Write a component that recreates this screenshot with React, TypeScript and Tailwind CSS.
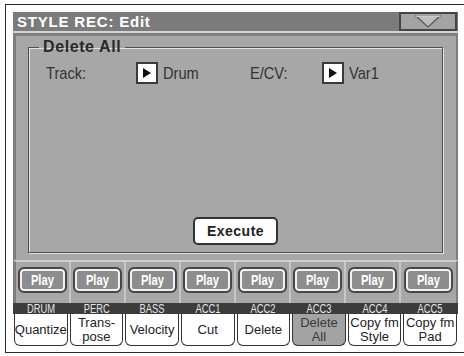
import React from 'react'

const tracks = ['DRUM', 'PERC', 'BASS', 'ACC1', 'ACC2', 'ACC3', 'ACC4', 'ACC5']

const tabs: { lines: string[]; active?: boolean }[] = [
  { lines: ['Quantize'] },
  { lines: ['Trans-', 'pose'] },
  { lines: ['Velocity'] },
  { lines: ['Cut'] },
  { lines: ['Delete'] },
  { lines: ['Delete', 'All'], active: true },
  { lines: ['Copy fm', 'Style'] },
  { lines: ['Copy fm', 'Pad'] },
]

function ArrowBox() {
  return (
    <div className="w-[22px] h-[22px] border-2 border-[#3a3a3a] bg-white flex items-center justify-center shrink-0">
      <svg width="8" height="10" viewBox="0 0 8 10">
        <polygon points="0,0 8,5 0,10" fill="#111" />
      </svg>
    </div>
  )
}

function PlayButton() {
  return (
    <div className="w-[49px] h-[26px] rounded-[6px] border-2 border-[#474747] bg-[#8d8d8d] shadow-[inset_0_0_0_2px_#f2f2f2] flex items-center justify-center">
      <span className="inline-block text-[14px] font-bold text-white scale-x-[0.8] leading-none">Play</span>
    </div>
  )
}

export default function App() {
  return (
    <div className="w-[464px] h-[356px] bg-white overflow-hidden font-['Liberation_Sans',Arial,sans-serif]">
      <div className="ml-[5px] mt-[4px] w-[470px] h-[349px] border-l border-t border-b border-[#2a2a2a] pl-[7px] pt-[7px]">
        <div className="w-[445px] h-[334px] flex flex-col bg-white">
          {/* Title bar */}
          <div className="h-[19px] flex bg-[#7b7b7b]">
            <div className="flex-1 pl-[4px] flex items-center text-[15px] font-bold tracking-[0.8px] text-white leading-none">
              STYLE REC: Edit
            </div>
            <div className="w-[58px] h-[19px] mr-[1px] border-2 border-[#444] bg-[#a3a3a3] flex items-center justify-center">
              <svg width="26" height="13" viewBox="0 0 26 13">
                <polygon points="1,1 25,1 13,12" fill="#bdbdbd" stroke="#555" strokeWidth="1.2" />
                <line x1="1" y1="1.2" x2="25" y2="1.2" stroke="#eee" strokeWidth="1" />
              </svg>
            </div>
          </div>
          <div className="h-[2px] bg-[#d4d4d4]" />

          {/* Main panel */}
          <div className="h-[227px] flex flex-col border-l-[3px] border-t-[3px] border-r-[2px] border-[#7e7e7e] bg-[#a7a7a7] pl-[12px] pr-[13px] pt-[2px] pb-[7px]">
            <fieldset className="flex-1 border border-[#505050] shadow-[inset_1px_1px_0_#e4e4e4,1px_1px_0_#e4e4e4]">
              <legend className="ml-[10px] px-[4px] text-[16px] font-bold tracking-[0.6px] text-[#2a2a2a] leading-[18px]">
                Delete All
              </legend>
              <div className="h-[196px] flex flex-col">
                <div className="flex items-center pl-[17px] mt-[6px] text-[17px] text-[#333] leading-none">
                  <div className="w-[90px]">
                    <span className="inline-block origin-left scale-x-[0.86]">Track:</span>
                  </div>
                  <ArrowBox />
                  <div className="w-[87px] ml-[5px]">
                    <span className="inline-block origin-left scale-x-[0.86]">Drum</span>
                  </div>
                  <div className="w-[72px]">
                    <span className="inline-block origin-left scale-x-[0.86]">E/CV:</span>
                  </div>
                  <ArrowBox />
                  <div className="ml-[5px]">
                    <span className="inline-block origin-left scale-x-[0.86]">Var1</span>
                  </div>
                </div>
                <div className="mt-auto mb-[7px] flex justify-center">
                  <div className="w-[85px] h-[28px] rounded-[5px] border-2 border-[#333] bg-white flex items-center justify-center text-[14px] font-bold tracking-[0.5px] text-[#222]">
                    Execute
                  </div>
                </div>
              </div>
            </fieldset>
          </div>

          {/* Play row */}
          <div className="h-[43px] border-l-[3px] border-r-[2px] border-[#7e7e7e] bg-[#a7a7a7] border-t-2 border-t-[#d0d0d0] grid grid-cols-8">
            {tracks.map((t, i) => (
              <div
                key={t}
                className={`flex justify-center pt-[5px] ${i < 7 ? 'border-r-2 border-[#c6c6c6]' : ''}`}
              >
                <PlayButton />
              </div>
            ))}
          </div>

          {/* Track labels */}
          <div className="h-[11px] bg-[#3c3c3c] grid grid-cols-8">
            {tracks.map(t => (
              <div key={t} className="flex items-center justify-center">
                <span className="inline-block text-[12px] leading-none text-[#e6e6e6] scale-x-[0.78]">{t}</span>
              </div>
            ))}
          </div>

          {/* Tabs */}
          <div className="h-[32px] bg-white grid grid-cols-8">
            {tabs.map((tab, i) => (
              <div
                key={i}
                className={`mx-[1px] h-[32px] border border-t-0 border-[#333] rounded-b-[6px] flex flex-col items-center justify-center text-[13px] leading-[14px] ${tab.active ? 'bg-[#a3a3a3] text-[#3a3a3a]' : 'bg-white text-[#222]'}`}
              >
                {tab.lines.map(l => (
                  <span key={l} className="whitespace-nowrap">{l}</span>
                ))}
              </div>
            ))}
          </div>
        </div>
      </div>
    </div>
  )
}
